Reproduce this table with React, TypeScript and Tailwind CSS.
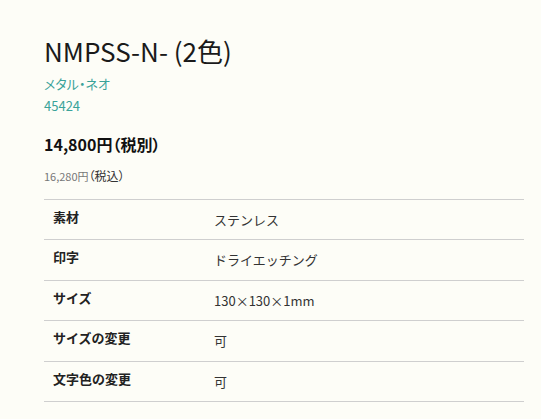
import React from "react";

const rows: [string, string, string][] = [
  ["素材", "ステンレス", "h-[40px]"],
  ["印字", "ドライエッチング", "h-[41px]"],
  ["サイズ", "130×130×1mm", "h-[40px]"],
  ["サイズの変更", "可", "h-[41px]"],
  ["文字色の変更", "可", "h-[40px]"],
];

export default function App() {
  return (
    <div
      className="w-[541px] h-[419px] bg-[#fdfdf7] text-[#222] overflow-hidden"
      style={{ fontFamily: '"Noto Sans CJK JP", "Noto Sans", sans-serif' }}
    >
      <div className="pl-[44px] pr-[17px] pt-[33px]">
        <h1 className="text-[26px] leading-[36px] text-[#1a1a1a]">NMPSS-N- (2色)</h1>
        <div className="mt-[4px] text-[13px] leading-[22px] text-[#3aa39a] [font-feature-settings:'palt']">メタル・ネオ</div>
        <div className="text-[13px] leading-[22px] text-[#3aa39a]">45424</div>
        <div className="mt-[15px] text-[16px] leading-[24px] font-bold text-[#111] [font-feature-settings:'palt']">14,800円（税別）</div>
        <div className="mt-[11px] text-[11px] leading-[18px] text-[#777] [font-feature-settings:'palt']">
          16,280円<span className="text-[12px] text-[#333]">（税込）</span>
        </div>
        <div className="mt-[14px] border-t border-[#cfcfcf]">
          {rows.map(([k, v, h]) => (
            <div key={k} className={"flex border-b border-[#cfcfcf] " + h}>
              <div className="w-[170px] pl-[9px] pt-[8px] text-[13px] leading-[18px] font-bold text-[#222]">{k}</div>
              <div className="pt-[11px] text-[13px] leading-[18px] text-[#333]">{v}</div>
            </div>
          ))}
        </div>
      </div>
    </div>
  );
}
